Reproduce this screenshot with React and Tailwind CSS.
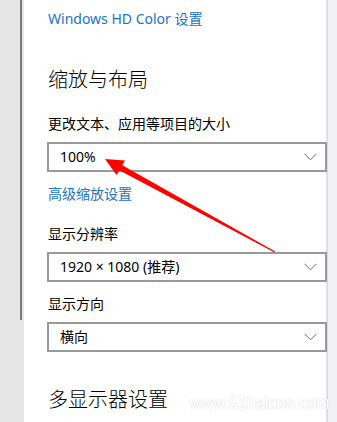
const FONT = "font-['Segoe_UI','Noto_Sans','Noto_Sans_CJK_SC',sans-serif]";

function Chevron() {
  return (
    <svg width="13" height="8" viewBox="0 0 13 8" className="shrink-0">
      <path d="M0.5 0.8 L6.5 6.8 L12.5 0.8" fill="none" stroke="#6b6b6b" strokeWidth="1" />
    </svg>
  );
}

function Dropdown({ value }) {
  return (
    <div className="relative z-10 -ml-px flex h-[30px] w-[280px] items-center justify-between border-2 border-[#999999] bg-white pl-[11px] pr-[8px]">
      <span className="text-[14px] leading-5 text-black">{value}</span>
      <Chevron />
    </div>
  );
}

function Arrow() {
  // red annotation arrow pointing to the scale dropdown
  return (
    <svg className="pointer-events-none absolute left-0 top-0 z-20" width="337" height="422">
      <polygon
        points="105,159 125,160.5 122.3,165.2 275.2,251.4 274.6,252.4 119.6,170.4 116.5,175"
        fill="#ff0000"
      />
    </svg>
  );
}

export default function App() {
  return (
    <div className={`relative flex h-[422px] w-[337px] overflow-hidden bg-white ${FONT}`}>
      <div className="w-[24px] shrink-0 bg-[#e6e6e6]">
        <div className="ml-[20px] h-[320px] w-[2px] bg-[#7a7a7a]" />
      </div>

      <div className="flex w-[301px] shrink-0 flex-col bg-white pl-6 pt-[9px]">
        <a className="text-[14px] leading-5 text-[#1a73c9]">Windows HD Color 设置</a>

        <h2 className="mt-[37px] text-[20px] font-light leading-7 text-black">缩放与布局</h2>

        <div className="mt-[20px] text-[14px] leading-5 text-black">更改文本、应用等项目的大小</div>
        <div className="mt-[8px]">
          <Dropdown value="100%" />
        </div>

        <a className="mt-[12px] text-[14px] leading-5 text-[#1a73c9]">高级缩放设置</a>

        <div className="mt-[20px] text-[14px] leading-5 text-black">显示分辨率</div>
        <div className="mt-[8px]">
          <Dropdown value="1920 × 1080 (推荐)" />
        </div>

        <div className="mt-[12px] text-[14px] leading-5 text-black">显示方向</div>
        <div className="mt-[8px]">
          <Dropdown value="横向" />
        </div>

        <h2 className="mt-[34px] text-[20px] font-light leading-7 text-black">多显示器设置</h2>
      </div>

      <div className="w-[3px] shrink-0 bg-gradient-to-r from-white to-[#d2d2d2]" />
      <div className="flex-1 bg-[#f2f2f5]" />

      <div className="absolute left-[190px] top-[393px] z-20 origin-left scale-x-[0.9] font-['Liberation_Sans',sans-serif] text-[18px] leading-5 text-white [text-shadow:0_0_2px_rgba(0,0,0,0.18)]">
        www.51halcon.com
      </div>

      <Arrow />
    </div>
  );
}
